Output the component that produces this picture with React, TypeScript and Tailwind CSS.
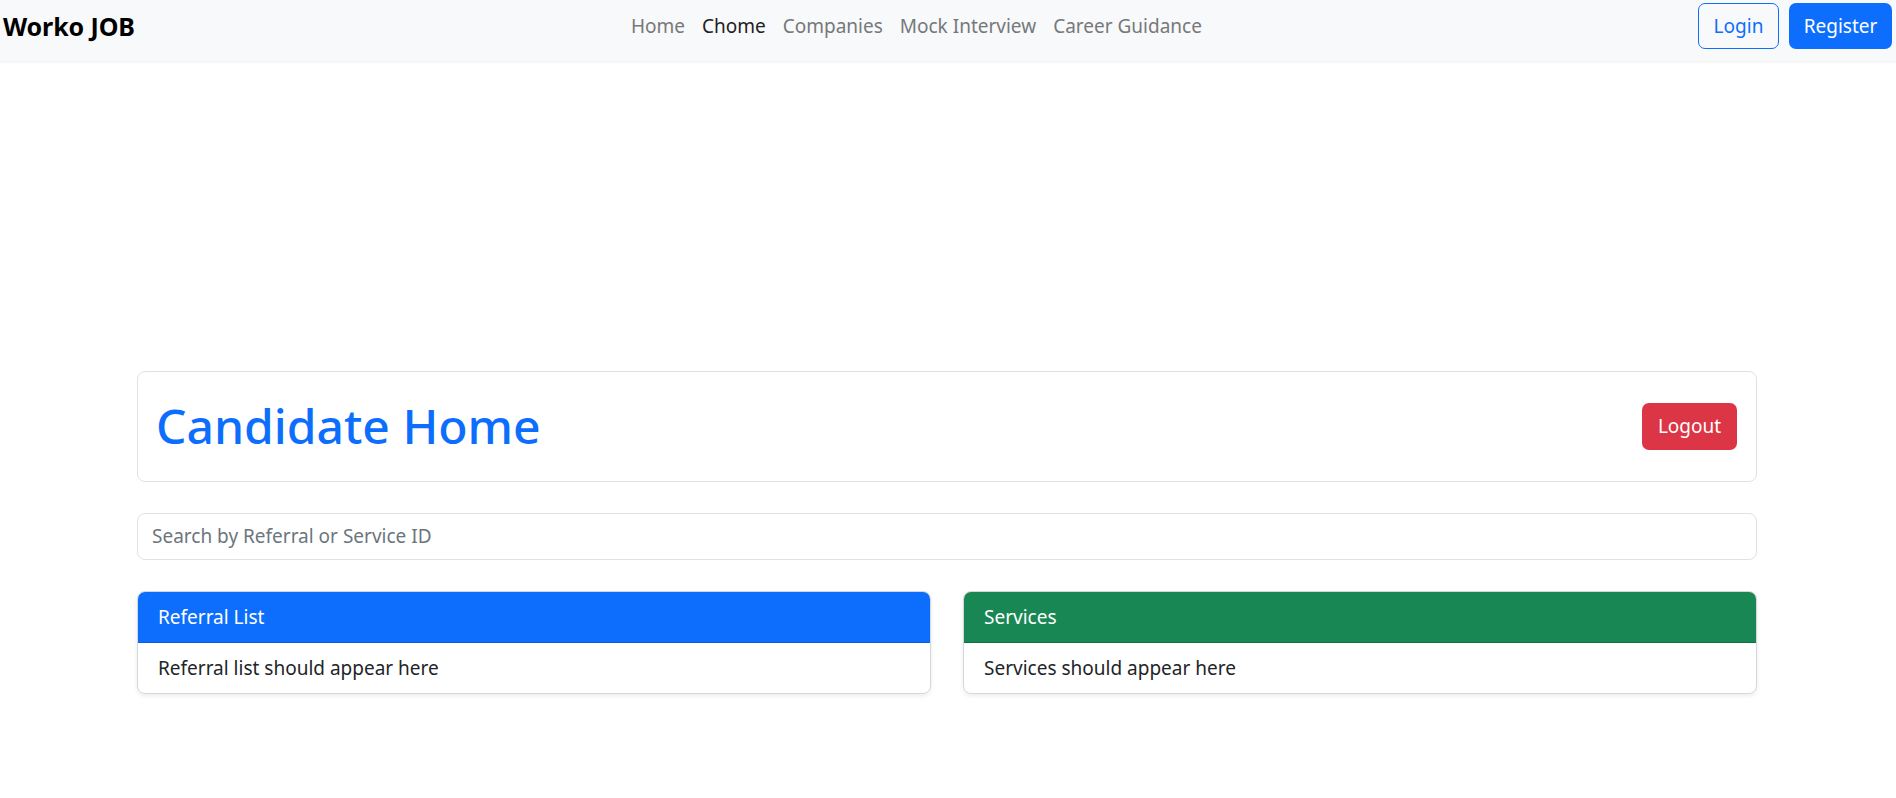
export default function App() {
  const font = { fontFamily: '"Noto Sans", "Open Sans", Arial, sans-serif' };
  return (
    <div className="min-h-[798px] bg-white text-[#212529]" style={font}>
      <nav className="flex h-[61px] items-center bg-[#f8f9fa] shadow-[0_1px_3px_rgba(0,0,0,0.08)] pl-[3px] pr-[4px] pb-[9px]">
        <div className="text-[25px] font-bold text-black leading-none tracking-[-0.1px]">Worko JOB</div>
        <div className="ml-[496px] flex items-center gap-[17px] text-[19px] text-[#76787a]">
          <span>Home</span>
          <span className="text-[#1f2022]">Chome</span>
          <span>Companies</span>
          <span>Mock Interview</span>
          <span>Career Guidance</span>
        </div>
        <div className="ml-auto flex items-center gap-[10px]">
          <button className="h-[46px] w-[81px] rounded-[7px] border border-[#0d6efd] text-[19px] text-[#0d6efd]">Login</button>
          <button className="h-[46px] w-[103px] rounded-[7px] bg-[#0d6efd] text-[19px] text-white">Register</button>
        </div>
      </nav>

      <main className="mx-[137px] w-[1620px] pt-[310px]">
        <div className="flex h-[111px] items-center justify-between rounded-[8px] border border-[#dee2e6] pl-[18px] pr-[19px]">
          <h1 className="text-[48px] font-medium leading-none text-[#0d6efd] pb-[2px]">Candidate Home</h1>
          <button className="h-[47px] w-[95px] rounded-[7px] bg-[#dc3545] text-[19px] text-white">Logout</button>
        </div>

        <div className="mt-[31px] flex h-[47px] items-center rounded-[8px] border border-[#dee2e6] px-[14px]">
          <span className="text-[19px] text-[#6c757d]">Search by Referral or Service ID</span>
        </div>

        <div className="mt-[31px] grid grid-cols-2 gap-[32px]">
          <div className="overflow-hidden rounded-[8px] border border-[#d5d8db] shadow-[0_2px_4px_rgba(0,0,0,0.08)]">
            <div className="flex h-[51px] items-center bg-[#0d6efd] px-[20px] text-[19px] text-white border-b border-[#0b5ed7]">Referral List</div>
            <div className="flex h-[50px] items-center px-[20px] text-[19px] text-[#212529]">Referral list should appear here</div>
          </div>
          <div className="overflow-hidden rounded-[8px] border border-[#d5d8db] shadow-[0_2px_4px_rgba(0,0,0,0.08)]">
            <div className="flex h-[51px] items-center bg-[#198754] px-[20px] text-[19px] text-white border-b border-[#146c43]">Services</div>
            <div className="flex h-[50px] items-center px-[20px] text-[19px] text-[#212529]">Services should appear here</div>
          </div>
        </div>
      </main>
    </div>
  );
}
